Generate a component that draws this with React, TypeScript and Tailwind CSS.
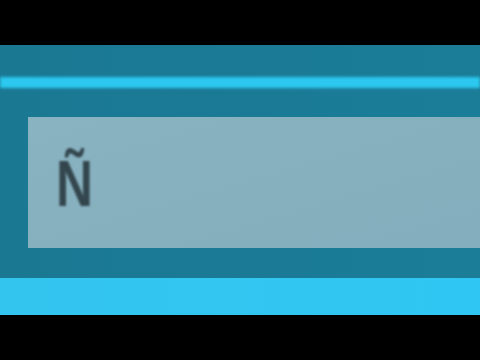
import React from "react";

export default function App() {
  return (
    <div className="w-[480px] h-[360px] flex flex-col bg-black overflow-hidden" style={{ fontFamily: '"Liberation Sans", Arial, sans-serif' }}>
      {/* top letterbox */}
      <div className="h-[45px] shrink-0 bg-black" />

      {/* teal panel */}
      <div className="h-[233px] shrink-0 flex flex-col bg-gradient-to-r from-[#1a7893] to-[#1b7d98] pt-[32px]">
        <div className="h-[11px] bg-[#2cc8ef] blur-[1.5px]" />
        <div className="mt-[29px] ml-[28px] h-[131px] flex items-center pl-[28px] bg-gradient-to-br from-[#8ab3c1] to-[#84adbd] blur-[0.6px]">
          <span className="text-[64px] leading-none font-bold text-[#34464d] scale-x-[0.8] origin-left blur-[1px] mt-[2px]">Ñ</span>
        </div>
      </div>

      {/* bright bar */}
      <div className="h-[37px] shrink-0 bg-gradient-to-r from-[#33c5ee] to-[#30c6f3] blur-[0.5px]" />

      <div className="flex-1 bg-black" />
    </div>
  );
}
